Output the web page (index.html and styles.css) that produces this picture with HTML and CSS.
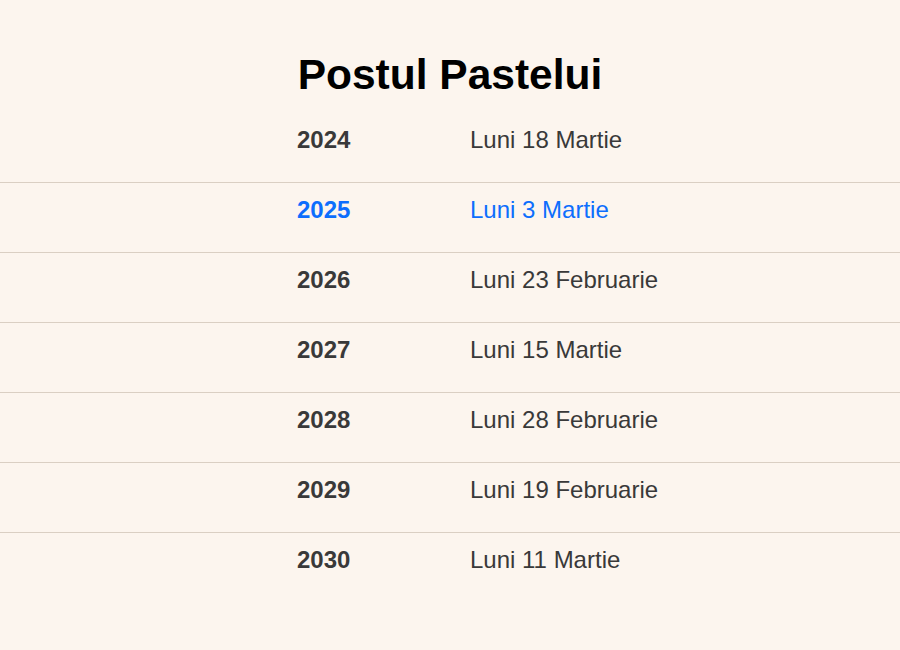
FILE: index.html
```html
<!DOCTYPE html>
<html lang="ro">
<head>
<meta charset="utf-8">
<title>Postul Pastelui</title>
<link rel="stylesheet" href="styles.css">
</head>
<body>
<main class="page">
  <h1 class="title">Postul Pastelui</h1>
  <div class="list">
    <div class="row"><div class="inner"><span class="year">2024</span><span class="date">Luni 18 Martie</span></div></div>
    <div class="row current"><div class="inner"><span class="year">2025</span><span class="date">Luni 3 Martie</span></div></div>
    <div class="row"><div class="inner"><span class="year">2026</span><span class="date">Luni 23 Februarie</span></div></div>
    <div class="row"><div class="inner"><span class="year">2027</span><span class="date">Luni 15 Martie</span></div></div>
    <div class="row"><div class="inner"><span class="year">2028</span><span class="date">Luni 28 Februarie</span></div></div>
    <div class="row"><div class="inner"><span class="year">2029</span><span class="date">Luni 19 Februarie</span></div></div>
    <div class="row"><div class="inner"><span class="year">2030</span><span class="date">Luni 11 Martie</span></div></div>
  </div>
</main>
</body>
</html>
```

FILE: styles.css
```css
html, body {
  margin: 0;
  padding: 0;
  background: #fcf5ee;
}
body {
  font-family: "Liberation Sans", Arial, sans-serif;
  color: #393939;
  width: 900px;
  height: 650px;
  overflow: hidden;
}
.page {
  padding-top: 51px;
}
.title {
  margin: 0 0 14px;
  font-size: 42.5px;
  line-height: 48px;
  font-weight: bold;
  color: #000000;
  text-align: center;
}
.row {
  border-bottom: 1px solid #dacfc3;
  padding: 13px 0 28px;
}
.row:last-child {
  border-bottom: none;
}
.inner {
  width: 306px;
  margin: 0 auto;
  display: flex;
  font-size: 24px;
  line-height: 28px;
  text-align: left;
}
.year {
  flex: none;
  width: 173px;
  font-weight: bold;
}
.date {
  flex: none;
  white-space: nowrap;
}
.current {
  color: #0d6efd;
}
```
